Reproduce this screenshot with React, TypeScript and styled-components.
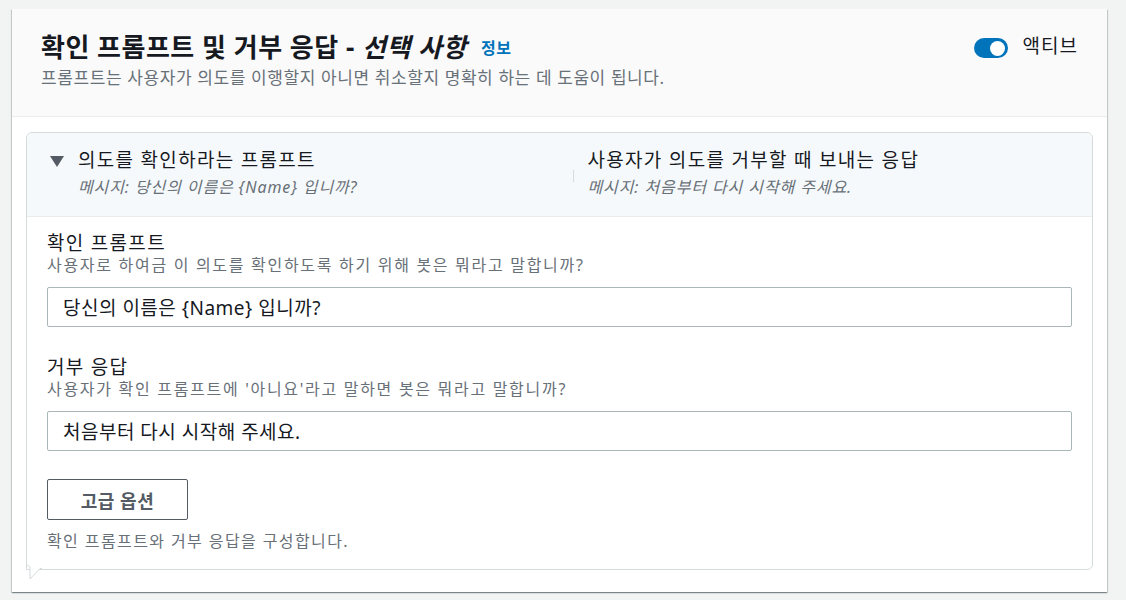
import styled, { createGlobalStyle } from "styled-components"

const GlobalStyle = createGlobalStyle`
    body {
        margin: 0;
        background: #f2f3f3;
        font-family: "Noto Sans", "Noto Sans CJK KR", sans-serif;
        color: #16191f;
    }
`

interface FieldProps {
    label: string
    hint: string
    value: string
}

function Field({label, hint, value}: FieldProps){
    return (
        <FieldBox>
            <Label>{label}</Label>
            <Hint>{hint}</Hint>
            <Input defaultValue={value} />
        </FieldBox>
    )
}

export default function App(){
    return (
        <Page>
            <GlobalStyle />
            <Panel>
                <PanelHeader>
                    <div>
                        <Title>
                            확인 프롬프트 및 거부 응답 - <em>선택 사항</em>
                            <InfoLink>정보</InfoLink>
                        </Title>
                        <Subtitle>프롬프트는 사용자가 의도를 이행할지 아니면 취소할지 명확히 하는 데 도움이 됩니다.</Subtitle>
                    </div>
                    <ToggleWrap>
                        <Toggle aria-hidden><Knob /></Toggle>
                        액티브
                    </ToggleWrap>
                </PanelHeader>
                <PanelBody>
                    <Card>
                        <CardHeader>
                            <Caret viewBox="0 0 14 11" aria-hidden>
                                <polygon points="0,0 14,0 7,11" fill="#545b64" />
                            </Caret>
                            <Column>
                                <ColTitle>의도를 확인하라는 프롬프트</ColTitle>
                                <ColMessage>메시지: 당신의 이름은 {"{Name}"} 입니까?</ColMessage>
                            </Column>
                            <Column $divided>
                                <Sep />
                                <div>
                                    <ColTitle>사용자가 의도를 거부할 때 보내는 응답</ColTitle>
                                    <ColMessage>메시지: 처음부터 다시 시작해 주세요.</ColMessage>
                                </div>
                            </Column>
                        </CardHeader>
                        <CardBody>
                            <Field
                                label="확인 프롬프트"
                                hint="사용자로 하여금 이 의도를 확인하도록 하기 위해 봇은 뭐라고 말합니까?"
                                value="당신의 이름은 {Name} 입니까?"
                            />
                            <Field
                                label="거부 응답"
                                hint="사용자가 확인 프롬프트에 '아니요'라고 말하면 봇은 뭐라고 말합니까?"
                                value="처음부터 다시 시작해 주세요."
                            />
                            <Button>고급 옵션</Button>
                            <Helper>확인 프롬프트와 거부 응답을 구성합니다.</Helper>
                        </CardBody>
                        <Tail width="16" height="20" viewBox="0 0 16 20" aria-hidden>
                            <polygon points="0,0 16,0 16,6 14,6 4,17 4,5 1,2" fill="#ffffff" />
                            <polyline points="0.5,0 0.5,2 4,5 4,17 14,6.5 16,6.5" fill="none" stroke="#d5dbdb" strokeWidth="1" />
                        </Tail>
                    </Card>
                </PanelBody>
            </Panel>
        </Page>
    )
}

const Page = styled.div`
    padding: 9px 19px 8px 12px;
`

const Panel = styled.section`
    background: #ffffff;
    box-shadow: 0 1px 1px 0 rgba(0, 28, 36, 0.3), 1px 1px 1px 0 rgba(0, 28, 36, 0.15), -1px 1px 1px 0 rgba(0, 28, 36, 0.15);
`

const PanelHeader = styled.header`
    display: flex;
    justify-content: space-between;
    align-items: flex-start;
    background: #fafafa;
    border-bottom: 1px solid #eaeded;
    padding: 20px 29px 27px 29px;
`

const Title = styled.h2`
    margin: 0;
    font-size: 26px;
    line-height: 36px;
    font-weight: 700;
    letter-spacing: 0.5px;
    color: #16191f;

    em {
        font-style: italic;
    }
`

const InfoLink = styled.a`
    margin-left: 14px;
    font-size: 16px;
    font-weight: 600;
    letter-spacing: 0.5px;
    color: #0073bb;
    vertical-align: 3px;
`

const Subtitle = styled.p`
    margin: 1px 0 0 0;
    font-size: 17px;
    line-height: 22px;
    letter-spacing: 0.6px;
    color: #687078;
`

const ToggleWrap = styled.div`
    display: flex;
    align-items: center;
    gap: 15px;
    margin-top: 4px;
    font-size: 19px;
    line-height: 24px;
    letter-spacing: 1px;
    color: #16191f;
`

const Toggle = styled.span`
    display: flex;
    align-items: center;
    justify-content: flex-end;
    width: 34px;
    height: 20px;
    margin-top: 5px;
    padding: 0 3px;
    box-sizing: border-box;
    border-radius: 10px;
    background: #0073bb;
`

const Knob = styled.span`
    width: 15px;
    height: 15px;
    border-radius: 50%;
    background: #ffffff;
`

const PanelBody = styled.div`
    padding: 15px 14px 22px 14px;
`

const Card = styled.div`
    position: relative;
    border: 1px solid #d5dbdb;
    border-radius: 6px;
    border-bottom-left-radius: 0;
`

const CardHeader = styled.div`
    display: grid;
    grid-template-columns: 14px 1fr 1fr;
    column-gap: 14px;
    padding: 15px 23px 18px 23px;
    background: #f6f9fb;
    border-bottom: 1px solid #eaeded;
    border-radius: 6px 6px 0 0;
`

const Caret = styled.svg`
    width: 14px;
    height: 11px;
    margin-top: 8px;
`

const Column = styled.div<{ $divided?: boolean }>`
    display: ${p => (p.$divided ? "flex" : "block")};
    align-items: center;
    margin-left: ${p => (p.$divided ? "-8px" : "0")};
`

const Sep = styled.span`
    flex: none;
    width: 1px;
    height: 12px;
    margin: 6px 14px 0 0;
    background: #d5dbdb;
`

const ColTitle = styled.div`
    font-size: 19px;
    line-height: 24px;
    letter-spacing: 1.3px;
    color: #16191f;
`

const ColMessage = styled.div`
    margin-top: 4px;
    font-size: 16px;
    line-height: 22px;
    letter-spacing: 0.9px;
    font-style: italic;
    color: #687078;
`

const CardBody = styled.div`
    padding: 15px 20px 18px 20px;
`

const FieldBox = styled.div`
    & + & {
        margin-top: 29px;
    }
`

const Label = styled.div`
    font-size: 19px;
    line-height: 23px;
    letter-spacing: 1.3px;
    color: #16191f;
`

const Hint = styled.div`
    font-size: 16px;
    line-height: 20px;
    letter-spacing: 1.7px;
    color: #687078;
`

const Input = styled.input`
    display: block;
    width: 100%;
    height: 40px;
    margin-top: 12px;
    box-sizing: border-box;
    padding: 0 15px;
    border: 1px solid #aab7b8;
    border-radius: 2px;
    background: #ffffff;
    font-family: inherit;
    font-size: 19px;
    letter-spacing: 0.5px;
    color: #16191f;
`

const Button = styled.button`
    display: block;
    width: 141px;
    height: 41px;
    margin-top: 28px;
    border: 1px solid #545b64;
    border-radius: 2px;
    background: #ffffff;
    font-family: inherit;
    font-size: 18px;
    font-weight: 700;
    letter-spacing: 0.5px;
    color: #545b64;
`

const Helper = styled.div`
    margin-top: 11px;
    font-size: 16px;
    line-height: 20px;
    letter-spacing: 1.4px;
    color: #687078;
`

const Tail = styled.svg`
    position: absolute;
    left: -1px;
    bottom: -13px;
`
